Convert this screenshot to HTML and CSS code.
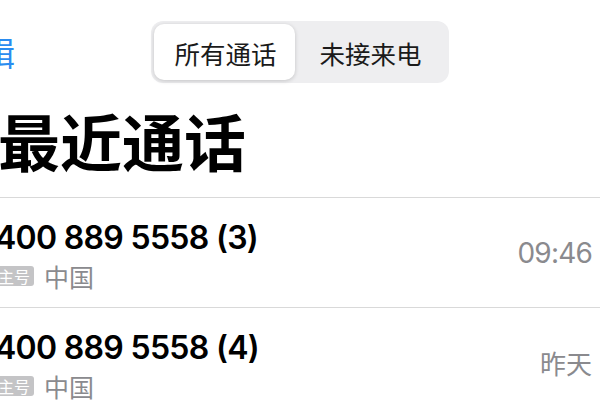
FILE: index.html
```html
<!DOCTYPE html>
<html lang="zh-CN">
<head>
<meta charset="utf-8">
<title>最近通话</title>
<link rel="stylesheet" href="styles.css">
</head>
<body>
<div class="screen">
  <header class="nav">
    <div class="nav-left"><span class="edit">编辑</span></div>
    <div class="segmented">
      <span class="seg seg-active">所有通话</span>
      <span class="seg">未接来电</span>
    </div>
    <div class="nav-right"></div>
  </header>
  <h1 class="title">最近通话</h1>
  <ul class="calls">
    <li class="call">
      <div class="call-main">
        <div class="number">400 889 5558 (3)</div>
        <div class="sub"><span class="badge">主号</span><span class="place">中国</span></div>
      </div>
      <div class="time">09:46</div>
    </li>
    <li class="call">
      <div class="call-main">
        <div class="number">400 889 5558 (4)</div>
        <div class="sub"><span class="badge">主号</span><span class="place">中国</span></div>
      </div>
      <div class="time time-cjk">昨天</div>
    </li>
  </ul>
</div>
</body>
</html>
```
FILE: styles.css
```css
html, body {
  margin: 0;
  padding: 0;
  background: #ffffff;
}
body {
  width: 600px;
  height: 400px;
  overflow: hidden;
  font-family: "Noto Sans CJK SC", "Liberation Sans", sans-serif;
  color: #000;
}
.screen {
  width: 600px;
  height: 400px;
  overflow: hidden;
}
.nav {
  display: grid;
  grid-template-columns: 1fr auto 1fr;
  align-items: center;
  padding-top: 21px;
}
.nav-left {
  overflow: hidden;
}
.edit {
  display: block;
  margin-left: -51px;
  font-size: 33px;
  line-height: 33px;
  color: #2a8cf0;
  white-space: nowrap;
}
.segmented {
  display: flex;
  align-items: stretch;
  height: 56px;
  padding: 3px;
  background: #eeeef0;
  border-radius: 12px;
}
.seg {
  display: flex;
  align-items: center;
  justify-content: center;
  width: 151px;
  font-size: 25.5px;
  color: #1a1a1a;
}
.seg-active {
  width: 139px;
  padding-left: 2px;
  background: #ffffff;
  border-radius: 10px;
  box-shadow: 0 1px 4px rgba(0, 0, 0, 0.18);
}
.title {
  margin: 26px 0 0 -2px;
  font-size: 62px;
  line-height: 62px;
  font-weight: 700;
  height: 88px;
}
.calls {
  list-style: none;
  margin: 0;
  padding: 0;
  border-top: 1px solid #d9d9d9;
}
.call {
  display: flex;
  align-items: center;
  justify-content: space-between;
  height: 109px;
  border-bottom: 1px solid #d9d9d9;
  padding-right: 8px;
}
.call-main {
  display: flex;
  flex-direction: column;
  margin-left: -6px;
  padding-top: 1px;
}
.number {
  font-family: "Inter", "Liberation Sans", sans-serif;
  font-weight: 600;
  font-size: 32px;
  letter-spacing: -0.7px;
  line-height: 40px;
  margin-left: 1px;
  white-space: nowrap;
}
.sub {
  display: flex;
  align-items: center;
  gap: 10px;
  margin-top: 5px;
}
.badge {
  display: flex;
  align-items: center;
  height: 20px;
  padding: 0 4px;
  background: #c4c4c6;
  color: #ffffff;
  border-radius: 3px;
  font-size: 16px;
  line-height: 20px;
}
.place {
  font-size: 25px;
  line-height: 26px;
  color: #8a8a8e;
}
.time {
  font-family: "Inter", "Liberation Sans", sans-serif;
  font-size: 28px;
  letter-spacing: -0.8px;
  color: #8a8a8e;
}
.time-cjk {
  font-family: "Noto Sans CJK SC", sans-serif;
  font-size: 26px;
  letter-spacing: 0;
}
```
